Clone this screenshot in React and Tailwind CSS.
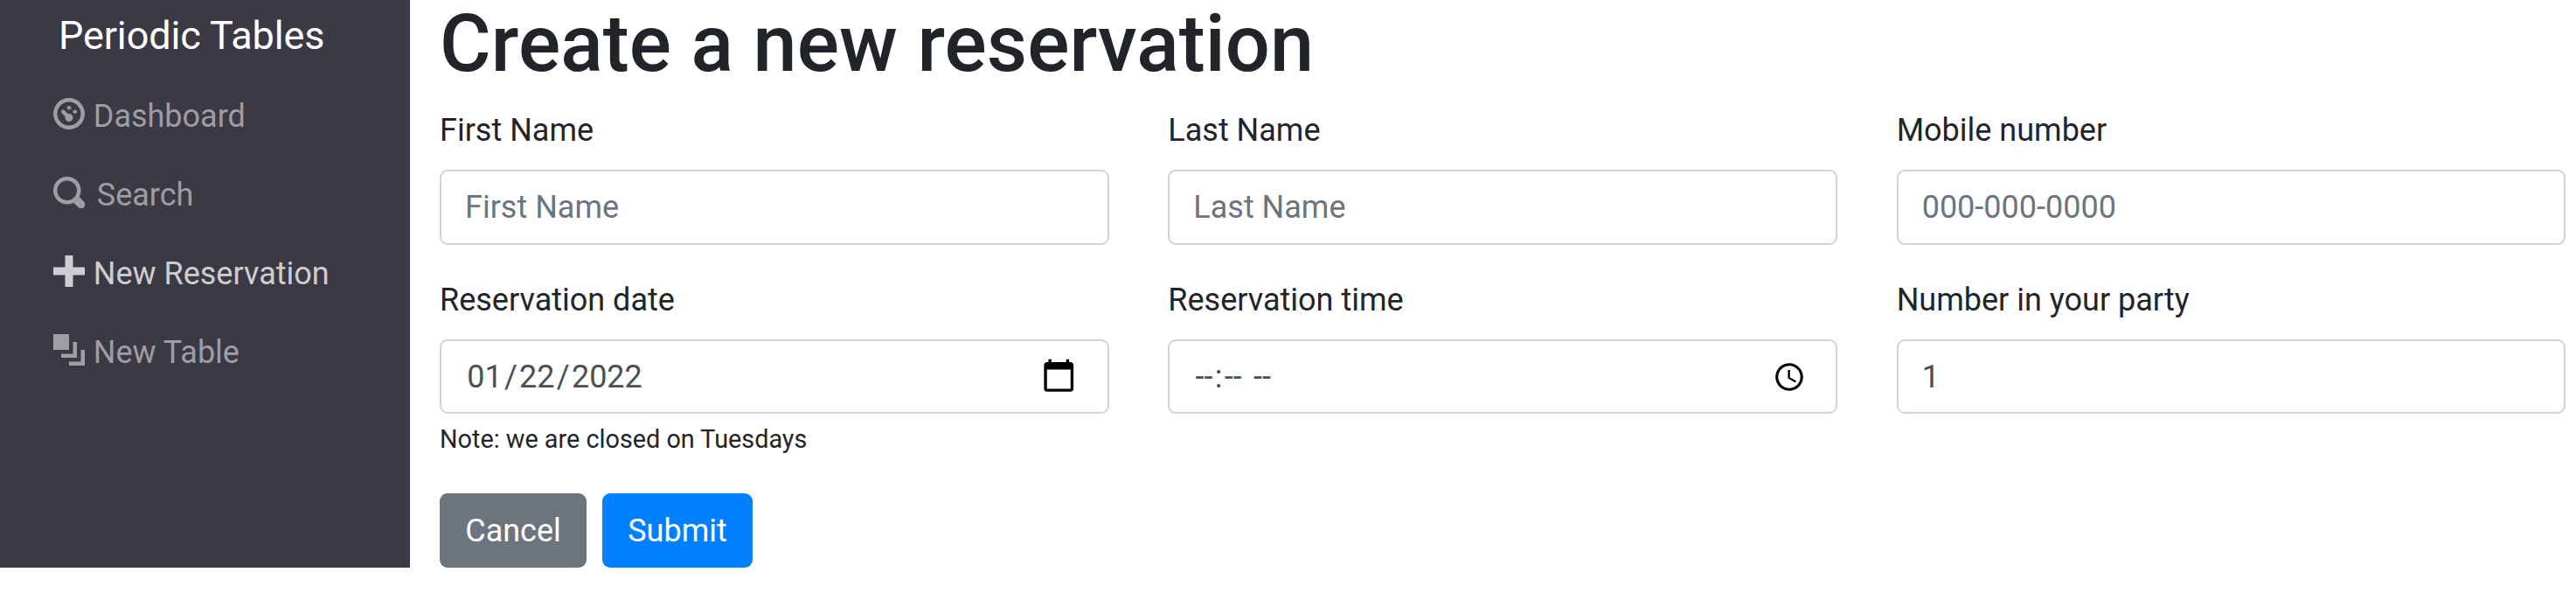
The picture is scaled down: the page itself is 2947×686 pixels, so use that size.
const icons = {
  dial: 'M4 0c-2.2 0-4 1.8-4 4s1.8 4 4 4 4-1.8 4-4-1.8-4-4-4zm0 1c1.66 0 3 1.34 3 3s-1.34 3-3 3-3-1.34-3-3 1.34-3 3-3zm0 1c-.28 0-.5.22-.5.5s.22.5.5.5.5-.22.5-.5-.22-.5-.5-.5zm-1.66 1a.5.5 0 0 0-.19.84l.91.91c-.02.08-.06.16-.06.25 0 .55.45 1 1 1s1-.45 1-1-.45-1-1-1c-.09 0-.17.04-.25.06l-.91-.91a.5.5 0 0 0-.44-.16.5.5 0 0 0-.06 0zm3.16 0c-.28 0-.5.22-.5.5s.22.5.5.5.5-.22.5-.5-.22-.5-.5-.5z',
  search: 'M3.5 0c-1.93 0-3.5 1.57-3.5 3.5s1.57 3.5 3.5 3.5c.59 0 1.17-.14 1.66-.41a1 1 0 0 0 .13.13l1 1a1.02 1.02 0 1 0 1.44-1.44l-1-1a1 1 0 0 0-.16-.13c.27-.49.44-1.06.44-1.66 0-1.93-1.55-3.5-3.5-3.5zm0 1c1.39 0 2.5 1.11 2.5 2.5 0 .66-.24 1.27-.66 1.72-.01.01-.02.02-.03.03a1 1 0 0 0-.13.13c-.44.4-1.04.63-1.69.63-1.39 0-2.5-1.11-2.5-2.5s1.11-2.5 2.5-2.5z',
  plus: 'M3 0v3h-3v2h3v3h2v-3h3v-2h-3v-3h-2z',
  layers: 'M0 0v4h4v-4h-4zm5 2v3h-3v1h4v-4h-1zm2 2v3h-3v1h4v-4h-1z',
};

const links = [
  { icon: 'dial', label: 'Dashboard', tone: 'text-[#9d9da2]', gap: 'gap-[9.5px]' },
  { icon: 'search', label: 'Search', tone: 'text-[#9d9da2]', gap: 'gap-[13.5px]' },
  { icon: 'plus', label: 'New Reservation', tone: 'text-[#cecdd0]', gap: 'gap-[9.5px]' },
  { icon: 'layers', label: 'New Table', tone: 'text-[#9d9da2]', gap: 'gap-[9.5px]' },
];

function Sidebar() {
  return (
    <nav className="flex h-[649px] w-[469px] shrink-0 flex-col bg-[#3b3a44]">
      <div className="pt-[7px] pl-[67px] text-[45px] leading-[68px] tracking-[-0.12px] text-white">Periodic Tables</div>
      <ul className="mt-[12px] flex flex-col">
        {links.map((l) => (
          <li key={l.label}>
            <a className={`flex h-[90px] items-center pl-[61.25px] ${l.gap} ${l.tone}`}>
              <svg viewBox="0 0 8 8" className="mb-[4px] size-[36px] shrink-0 fill-current">
                <path d={icons[l.icon]} />
              </svg>
              <span className="mt-[2px]">{l.label}</span>
            </a>
          </li>
        ))}
      </ul>
    </nav>
  );
}

function Field({ label, children, note }) {
  return (
    <div className="flex flex-col">
      <label className="mb-[18px] leading-[54px]">{label}</label>
      {children}
      {note && <small className="mt-[8px] text-[28.8px] leading-[43px]">{note}</small>}
    </div>
  );
}

const box = 'w-full rounded-[9px] border-2 border-[#ced4da] bg-white pl-[27px] text-[#495057] outline-none placeholder:text-[#6c757d] placeholder:opacity-100';

export default function App() {
  return (
    <div className="flex h-[686px] w-full items-start overflow-hidden bg-white font-[Roboto,sans-serif] text-[36px] leading-[54px] text-[#212529]">
      <Sidebar />
      <main className="w-[2500px] shrink-0 pl-[34px]">
        <h1 className="text-[90px] leading-[101px] font-medium tracking-[0.08px] whitespace-nowrap">Create a new reservation</h1>
        <form>
          <div className="mt-[21px] grid grid-cols-[765.83px_765.83px_765.83px] gap-x-[67.5px]">
            <Field label="First Name">
              <input className={`${box} h-[86px]`} placeholder="First Name" />
            </Field>
            <Field label="Last Name">
              <input className={`${box} h-[86px]`} placeholder="Last Name" />
            </Field>
            <Field label="Mobile number">
              <input className={`${box} h-[86px]`} placeholder="000-000-0000" />
            </Field>
          </div>
          <div className="mt-[36px] grid grid-cols-[765.83px_765.83px_765.83px] gap-x-[67.5px]">
            <Field label="Reservation date" note="Note: we are closed on Tuesdays">
              <div className={`${box} flex h-[85px] items-center justify-between pr-[35px]`}>
                <span className="flex">
                  <span className="px-[2.25px]">01</span>
                  <span>/</span>
                  <span className="px-[2.25px]">22</span>
                  <span>/</span>
                  <span className="px-[2.25px]">2022</span>
                </span>
                <svg viewBox="0 0 24 24" className="mb-[2px] size-[40.5px] fill-black">
                  <path d="M20 3h-1V1h-2v2H7V1H5v2H4c-1.1 0-2 .9-2 2v16c0 1.1.9 2 2 2h16c1.1 0 2-.9 2-2V5c0-1.1-.9-2-2-2zm0 18H4V8h16v13z" />
                </svg>
              </div>
            </Field>
            <Field label="Reservation time">
              <div className={`${box} flex h-[85px] items-center justify-between pr-[34px]`}>
                <span className="flex whitespace-pre">
                  <span className="px-[2.25px]">--</span>
                  <span>:</span>
                  <span className="px-[2.25px]">--</span>
                  <span> </span>
                  <span className="px-[2.25px]">--</span>
                </span>
                <svg viewBox="0 0 24 24" className="size-[38px] fill-black">
                  <path d="M11.99 2C6.47 2 2 6.48 2 12s4.47 10 9.99 10C17.52 22 22 17.52 22 12S17.52 2 11.99 2zM12 20c-4.42 0-8-3.58-8-8s3.58-8 8-8 8 3.58 8 8-3.58 8-8 8z" />
                  <path d="M12.5 7H11v6l5.25 3.15.75-1.23-4.5-2.67z" />
                </svg>
              </div>
            </Field>
            <Field label="Number in your party">
              <input className={`${box} h-[85px]`} defaultValue="1" />
            </Field>
          </div>
          <div className="mt-[40px] flex gap-[18px] text-white">
            <button type="button" className="h-[85px] w-[168px] rounded-[9px] bg-[#6c757d]">Cancel</button>
            <button type="button" className="h-[85px] w-[172px] rounded-[9px] bg-[#0080ff]">Submit</button>
          </div>
        </form>
      </main>
    </div>
  );
}
